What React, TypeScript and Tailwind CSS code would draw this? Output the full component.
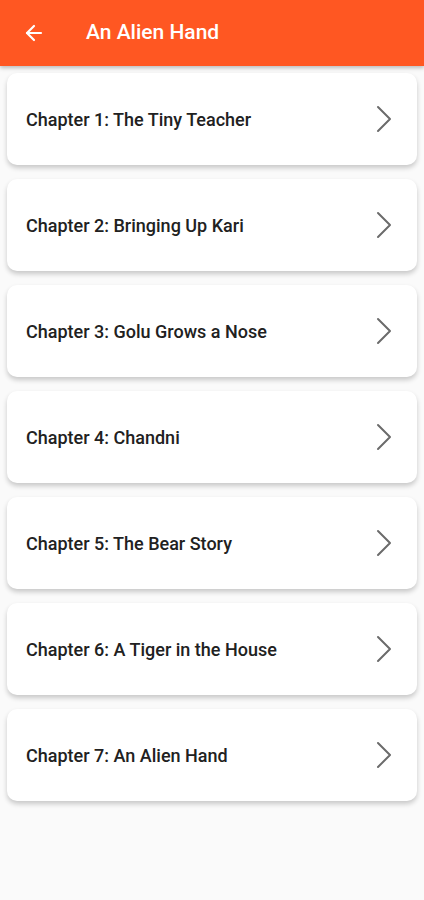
import { ArrowLeft } from 'lucide-react';

const chapters = [
    'Chapter 1: The Tiny Teacher',
    'Chapter 2: Bringing Up Kari',
    'Chapter 3: Golu Grows a Nose',
    'Chapter 4: Chandni',
    'Chapter 5: The Bear Story',
    'Chapter 6: A Tiger in the House',
    'Chapter 7: An Alien Hand',
];

// thin chevron, 13x24 like the original
function Chevron() {
    return (
        <svg width="17" height="28" viewBox="0 0 17 28" fill="none" className="shrink-0">
            <polyline points="2,2 14,14 2,26" stroke="#6b6b6b" strokeWidth="2" strokeLinecap="round" strokeLinejoin="round" />
        </svg>
    );
}

export default function App() {
    return (
        <div className="min-h-[900px] bg-[#fafafa]" style={{ fontFamily: 'Roboto, "Noto Sans", sans-serif' }}>
            <header className="h-[66px] bg-[#ff5722] flex items-center shadow-[0_2px_4px_rgba(0,0,0,0.25)] relative z-10">
                <ArrowLeft className="ml-[22px] w-[24px] h-[24px] text-white" strokeWidth={2.2} />
                <h1 className="ml-[40px] text-white text-[21px] font-medium">An Alien Hand</h1>
            </header>

            <div className="flex flex-col gap-[14px] px-[7px] pt-[7px]">
                {chapters.map((title) => (
                    <div
                        key={title}
                        className="h-[92px] bg-white rounded-[10px] shadow-[0_3px_5px_rgba(0,0,0,0.2)] flex items-center justify-between pl-[19px] pr-[24px]"
                    >
                        <span className="text-[18px] font-medium text-[#212121]">{title}</span>
                        <Chevron />
                    </div>
                ))}
            </div>
        </div>
    );
}
